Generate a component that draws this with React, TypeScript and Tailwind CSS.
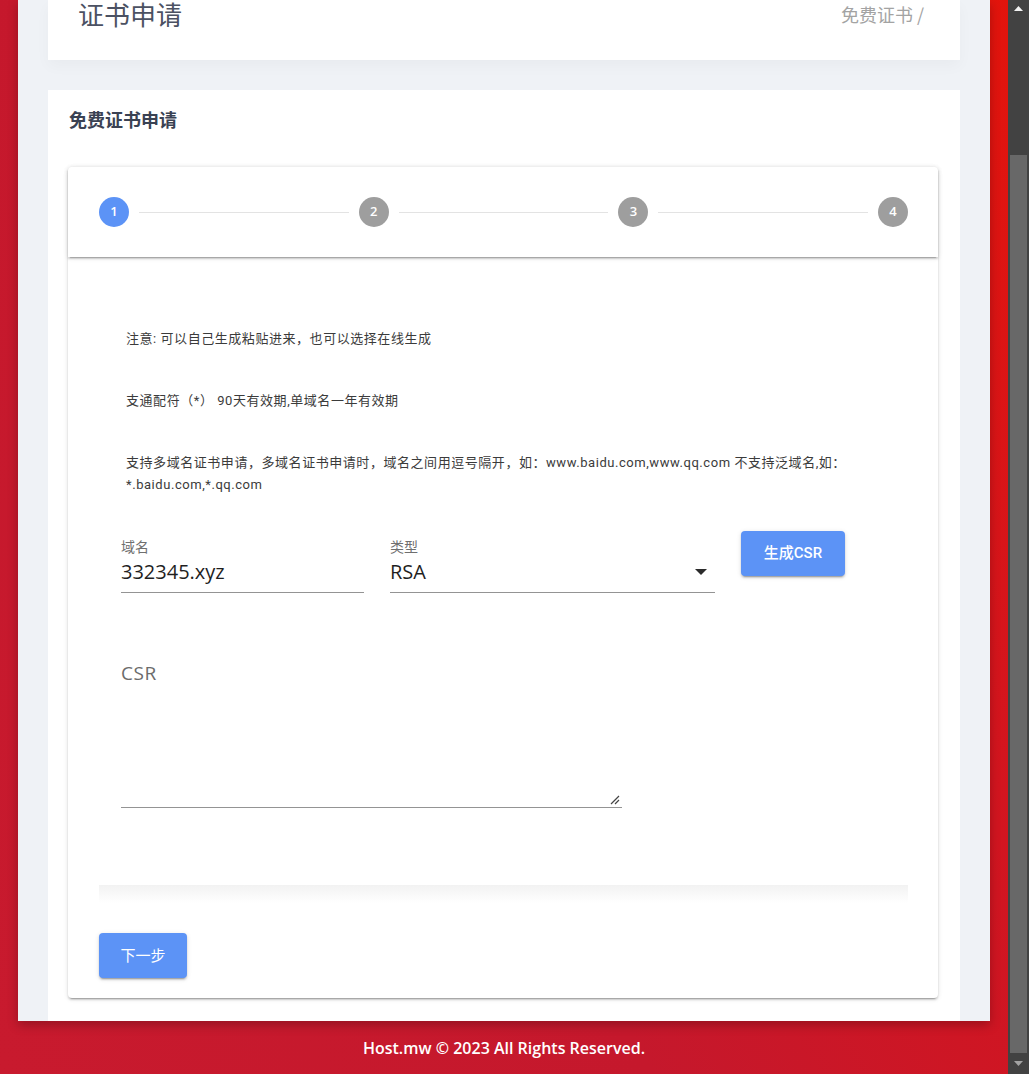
import React from "react";

const cjk = "font-['Noto_Sans_CJK_SC','Noto_Sans',sans-serif]";
const mont = "font-['Open_Sans','Noto_Sans_CJK_SC',sans-serif]";
const para = "font-['Roboto','Noto_Sans_CJK_SC',sans-serif]";

function Step({ n, active }: { n: number; active?: boolean }) {
  return (
    <div
      className={`flex h-[30px] w-[30px] shrink-0 items-center justify-center rounded-full text-[13px] font-semibold text-white ${mont} ${
        active ? "bg-[#5c93f6]" : "bg-[#9e9e9e]"
      }`}
    >
      {n}
    </div>
  );
}

function Line() {
  return <div className="mx-[10px] h-px flex-1 bg-[#e3e3e3]" />;
}

export default function App() {
  return (
    <div className="flex h-[1074px] w-[1029px] overflow-hidden">
      <div className="flex w-[1008px] flex-col bg-[linear-gradient(240deg,#e3140c_0%,#d21520_30%,#c5182c_60%,#c81a2e_100%)]">
        <div className="mx-[18px] flex h-[1021px] shrink-0 flex-col bg-[#eff2f6] px-[30px] shadow-[0_4px_10px_rgba(0,0,0,0.25)]">
          {/* top card */}
          <div className="flex h-[60px] shrink-0 items-start justify-between bg-white pl-[30px] pr-[36px] pt-[1px] shadow-[0_6px_14px_rgba(0,0,0,0.03)]">
            <div className={`text-[26px] leading-[26px] text-[#4b5162] ${cjk}`}>证书申请</div>
            <div className={`text-[18px] leading-[26px] text-[#a3a3a3] ${cjk}`}>免费证书 /</div>
          </div>

          {/* main card */}
          <div className="mt-[30px] flex flex-1 flex-col bg-white pl-[20px] pr-[22px]">
            <div className={`pl-[1px] pt-[17px] text-[18px] font-bold leading-[24px] text-[#3a4253] ${cjk}`}>
              免费证书申请
            </div>

            <div className="mt-[36px] rounded-[4px] bg-white shadow-[0_3px_1px_-2px_rgba(0,0,0,0.2),0_2px_2px_0_rgba(0,0,0,0.14),0_1px_5px_0_rgba(0,0,0,0.12)]">
              {/* stepper header */}
              <div className="flex h-[90px] items-center rounded-t-[4px] pl-[31px] pr-[30px] shadow-[0_3px_1px_-2px_rgba(0,0,0,0.2),0_2px_2px_0_rgba(0,0,0,0.14),0_1px_5px_0_rgba(0,0,0,0.12)]">
                <Step n={1} active />
                <Line />
                <Step n={2} />
                <Line />
                <Step n={3} />
                <Line />
                <Step n={4} />
              </div>

              {/* content */}
              <div className="pl-[31px] pr-[30px] pt-[71px] pb-[20px]">
                <div className={`pl-[27px] text-[13px] leading-[22px] tracking-[0.55px] text-[#3b3b3b] ${para}`}>
                  <p>注意: 可以自己生成粘贴进来，也可以选择在线生成</p>
                  <p className="mt-[40px]">支通配符（*） 90天有效期,单域名一年有效期</p>
                  <p className="mt-[40px] whitespace-nowrap">
                    支持多域名证书申请，多域名证书申请时，域名之间用逗号隔开，如：www.baidu.com,www.qq.com 不支持泛域名,如：
                    <br />
                    *.baidu.com,*.qq.com
                  </p>
                </div>

                <div className="mt-[35px] flex items-start pl-[22px]">
                  <div className="w-[243px] border-b border-[#949494] pb-[6px] pt-[5px]">
                    <div className={`text-[14px] leading-[20px] text-[#6f6f6f] ${cjk}`}>域名</div>
                    <div className={`mt-[2px] text-[20px] leading-[28px] text-[#1f1f1f] ${mont}`}>332345.xyz</div>
                  </div>
                  <div className="ml-[26px] w-[325px] border-b border-[#949494] pb-[6px] pt-[5px]">
                    <div className={`text-[14px] leading-[20px] text-[#6f6f6f] ${cjk}`}>类型</div>
                    <div className="mt-[2px] flex items-center justify-between">
                      <span className={`text-[20px] leading-[28px] text-[#1f1f1f] ${mont}`}>RSA</span>
                      <svg width="12" height="6" viewBox="0 0 12 6" className="mr-[8px]">
                        <path d="M0 0 L12 0 L6 6 Z" fill="#2b2b2b" />
                      </svg>
                    </div>
                  </div>
                  <button
                    className={`ml-[26px] flex h-[45px] w-[104px] items-center justify-center rounded-[4px] bg-[#5c93f6] text-[15px] font-medium text-white shadow-[0_3px_1px_-2px_rgba(0,0,0,0.2),0_2px_2px_0_rgba(0,0,0,0.14),0_1px_5px_0_rgba(0,0,0,0.12)] ${para}`}
                  >
                    生成CSR
                  </button>
                </div>

                <div className="relative ml-[22px] mt-[68px] flex h-[147px] w-[501px] flex-col border-b border-[#949494]">
                  <div className={`text-[19px] leading-[24px] tracking-[0.5px] text-[#6b6b6b] ${mont}`}>CSR</div>
                  <textarea className="flex-1 resize-none bg-transparent outline-none" />
                  <svg
                    width="10"
                    height="10"
                    viewBox="0 0 10 10"
                    className="pointer-events-none absolute bottom-[2px] right-[2px]"
                  >
                    <path d="M9 1 L1 9 M9 5 L5 9" stroke="#444" strokeWidth="1.2" />
                  </svg>
                </div>

                <div className="mt-[77px] h-[18px] bg-gradient-to-b from-[#f2f2f2] to-white" />

                <button
                  className={`mt-[30px] flex h-[45px] w-[88px] items-center justify-center rounded-[4px] bg-[#5c93f6] text-[15px] text-white shadow-[0_3px_1px_-2px_rgba(0,0,0,0.2),0_2px_2px_0_rgba(0,0,0,0.14),0_1px_5px_0_rgba(0,0,0,0.12)] ${cjk}`}
                >
                  下一步
                </button>
              </div>
            </div>
          </div>
        </div>

        {/* footer */}
        <div className={`flex flex-1 items-center justify-center text-[16px] font-semibold text-white ${mont}`}>
          Host.mw © 2023 All Rights Reserved.
        </div>
      </div>

      {/* scrollbar */}
      <div className="flex w-[21px] flex-col bg-[#424242]">
        <div className="flex h-[17px] items-center justify-center">
          <svg width="9" height="5" viewBox="0 0 9 5">
            <path d="M0 5 L4.5 0 L9 5 Z" fill="#f2f2f2" />
          </svg>
        </div>
        <div className="h-[138px]" />
        <div className="mx-[2px] flex-1 bg-[#686868]" />
        <div className="flex h-[21px] items-center justify-center">
          <svg width="9" height="5" viewBox="0 0 9 5">
            <path d="M0 0 L9 0 L4.5 5 Z" fill="#a3a3a3" />
          </svg>
        </div>
      </div>
    </div>
  );
}
